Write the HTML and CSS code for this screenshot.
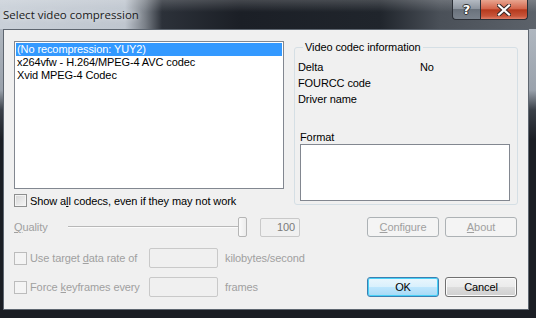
FILE: index.html
```html
<!DOCTYPE html>
<html lang="en">
<head>
  <meta charset="UTF-8">
  <title>Select video compression</title>
  <link rel="stylesheet" href="styles.css">
</head>
<body>
  <div class="window">
    <div class="titlebar">
      <span class="title">Select video compression</span>
      <div class="caption-buttons">
        <span class="cap-btn help">?</span>
        <span class="cap-btn close">
          <svg width="14" height="12" viewBox="0 0 14 12">
            <path d="M2 1.5 L12 10.5 M12 1.5 L2 10.5" stroke="#3a2a28" stroke-width="4.2" stroke-linecap="square"/>
            <path d="M2 1.5 L12 10.5 M12 1.5 L2 10.5" stroke="#fff" stroke-width="2.2" stroke-linecap="square"/>
          </svg>
        </span>
      </div>
    </div>

    <div class="client">
      <div class="top">
        <div class="left-col">
          <div class="listbox">
            <div class="item selected">(No recompression: YUY2)</div>
            <div class="item">x264vfw - H.264/MPEG-4 AVC codec</div>
            <div class="item">Xvid MPEG-4 Codec</div>
          </div>
          <label class="check-row">
            <span class="checkbox"></span>
            <span>Show a<u>l</u>l codecs, even if they may not work</span>
          </label>
        </div>

        <fieldset class="groupbox">
          <legend>Video codec information</legend>
          <div class="info">
            <span>Delta</span><span>No</span>
            <span>FOURCC code</span><span></span>
            <span>Driver name</span><span></span>
          </div>
          <div class="format-label">Format</div>
          <div class="format-box"></div>
        </fieldset>
      </div>

      <div class="row row-quality">
        <span class="quality-label disabled"><u>Q</u>uality</span>
        <div class="slider">
          <div class="track"></div>
          <div class="thumb"></div>
        </div>
        <div class="textbox quality-value">100</div>
        <div class="spacer"></div>
        <button class="button" disabled><u>C</u>onfigure</button>
        <button class="button" disabled><u>A</u>bout</button>
      </div>

      <div class="row row-rate">
        <label class="opt disabled">
          <span class="checkbox off"></span>
          <span>Use target <u>d</u>ata rate of</span>
        </label>
        <div class="textbox"></div>
        <span class="unit disabled">kilobytes/second</span>
      </div>

      <div class="row row-keys">
        <label class="opt disabled">
          <span class="checkbox off"></span>
          <span>Force <u>k</u>eyframes every</span>
        </label>
        <div class="textbox"></div>
        <span class="unit disabled">frames</span>
        <div class="spacer"></div>
        <button class="button default">OK</button>
        <button class="button active">Cancel</button>
      </div>
    </div>
  </div>
</body>
</html>
```

FILE: styles.css
```css
body {
  margin: 0;
  width: 536px;
  height: 318px;
  overflow: hidden;
  background-color: #1b1e24;
  font-family: 'Liberation Sans', Arial, sans-serif;
  font-size: 11px;
  letter-spacing: -0.1px;
  color: #000;
}
.window {
  width: 536px;
  height: 318px;
  background: linear-gradient(to bottom, #b9c0c8 0, #9aa2ac 90px, #3a4048 110px, #1b1e24 140px);
}
.titlebar {
  height: 29px;
  display: flex;
  justify-content: space-between;
  align-items: flex-start;
  background:
    linear-gradient(to bottom, rgba(255,255,255,0.18) 0, rgba(255,255,255,0) 12px),
    linear-gradient(to right, #c9d0d8 0, #bfc6cf 125px, #7a8088 145px, #2c3139 162px, #1b1f26 240px, #20252c 380px, #4a5058 440px, #5c626a 536px);
}
.title {
  font-family: 'Open Sans', 'Noto Sans', sans-serif;
  font-size: 11.5px;
  letter-spacing: 0;
  line-height: 16px;
  margin: 7px 0 0 3px;
  color: #1a1a1a;
  text-shadow: 0 0 6px rgba(255,255,255,0.9);
}
.caption-buttons {
  display: flex;
  margin-right: 8px;
}
.cap-btn {
  height: 19px;
  display: flex;
  align-items: center;
  justify-content: center;
  border: 1px solid #2b2f36;
  border-top: none;
}
.help {
  width: 27px;
  border-right: none;
  border-radius: 0 0 0 4px;
  background: linear-gradient(to bottom, #b4bac2 0, #8e96a0 45%, #6a727c 50%, #7a828c 100%);
  color: #fff;
  font-family: 'DejaVu Sans', sans-serif;
  font-weight: bold;
  font-size: 13px;
  text-shadow: 0 0 1px #222, 1px 0 0 #333, -1px 0 0 #333, 0 1px 0 #333, 0 -1px 0 #333;
}
.close {
  width: 46px;
  border-radius: 0 0 4px 0;
  background: linear-gradient(to bottom, #e8a58f 0, #d4664c 45%, #b63a1e 52%, #c8553a 85%, #e0806a 100%);
}
.client {
  box-sizing: border-box;
  width: 526px;
  height: 281px;
  margin-left: 3px;
  border: 1px solid #5e6670;
  background-color: #f0f0f0;
  padding: 11px 10px 0 10px;
}
.top {
  display: flex;
  align-items: flex-start;
}
.left-col {
  width: 270px;
}
.listbox {
  box-sizing: border-box;
  height: 148px;
  border: 1px solid #828790;
  background-color: #fff;
  padding: 1px;
}
.item {
  height: 13px;
  line-height: 13px;
  padding-left: 1px;
  white-space: nowrap;
}
.item.selected {
  background-color: #3399ff;
  color: #fff;
}
.check-row {
  display: flex;
  align-items: center;
  margin-top: 5px;
  height: 13px;
}
.checkbox {
  box-sizing: border-box;
  width: 13px;
  height: 13px;
  margin-right: 3px;
  border: 1px solid #8e8f8f;
  background: linear-gradient(135deg, #d6d6d6 0, #f6f6f6 100%);
  box-shadow: inset 0 0 0 1px #f4f4f4;
  flex-shrink: 0;
}
.checkbox.off {
  border-color: #bcbcbc;
  background: #f4f4f4;
  box-shadow: none;
}
.groupbox {
  box-sizing: border-box;
  width: 224px;
  height: 164px;
  margin: 0 0 0 10px;
  padding: 7px 3px 0 3px;
  border: 1px solid #d5dfe5;
  border-radius: 3px;
}
.groupbox legend {
  padding: 0 2px;
  margin-left: 5px;
  line-height: 13px;
}
.info {
  display: grid;
  grid-template-columns: 122px auto;
  row-gap: 3px;
  line-height: 13px;
}
.format-label {
  margin-top: 25px;
  padding-left: 2px;
  line-height: 13px;
}
.format-box {
  box-sizing: border-box;
  width: 210px;
  height: 57px;
  margin-left: 2px;
  border: 1px solid #828790;
  background-color: #fff;
}
.row {
  display: flex;
  align-items: center;
  height: 20px;
}
.row-quality {
  margin-top: 10px;
}
.row-rate {
  margin-top: 11px;
}
.row-keys {
  margin-top: 9px;
}
.disabled {
  color: #a0a0a0;
}
.quality-label {
  width: 52px;
}
.slider {
  position: relative;
  width: 181px;
  height: 20px;
}
.track {
  position: absolute;
  left: 2px;
  right: 4px;
  top: 9px;
  height: 1px;
  background-color: #b8b8b8;
  border-bottom: 1px solid #fbfbfb;
}
.thumb {
  position: absolute;
  right: 0;
  top: 0;
  box-sizing: border-box;
  width: 9px;
  height: 20px;
  border: 1px solid #b5b5b5;
  border-radius: 2px;
  background: linear-gradient(to right, #fafafa, #ececec);
}
.textbox {
  box-sizing: border-box;
  width: 69px;
  height: 20px;
  border: 1px solid #c9c9c9;
  border-radius: 2px;
  background-color: #f0f0f0;
}
.quality-value {
  width: 40px;
  height: 19px;
  margin-left: 13px;
  text-align: right;
  padding-right: 4px;
  line-height: 17px;
  color: #7a7a7a;
}
.opt {
  display: flex;
  align-items: center;
  width: 135px;
}
.unit {
  margin-left: 7px;
}
.spacer {
  flex: 1;
}
.button {
  box-sizing: border-box;
  width: 72px;
  height: 20px;
  margin-left: 6px;
  padding: 0;
  font-family: 'Liberation Sans', Arial, sans-serif;
  font-size: 11px;
  letter-spacing: -0.1px;
  color: #000;
  border: 1px solid #707070;
  border-radius: 3px;
  background: linear-gradient(to bottom, #f2f2f2 0, #ebebeb 50%, #dddddd 51%, #cfcfcf 100%);
  box-shadow: inset 0 0 0 1px #fcfcfc;
}
.button:last-child {
  margin-right: 1px;
}
.button:disabled {
  color: #a0a0a0;
  border-color: #adb2b5;
  background: #f4f4f4;
  box-shadow: none;
}
.button.default {
  border-color: #3c7fb1;
  background: linear-gradient(to bottom, #eaf6fd 0, #d9f0fc 50%, #bee6fd 51%, #a7d9f5 100%);
  box-shadow: inset 0 0 0 1px #48d1f7;
}
```
